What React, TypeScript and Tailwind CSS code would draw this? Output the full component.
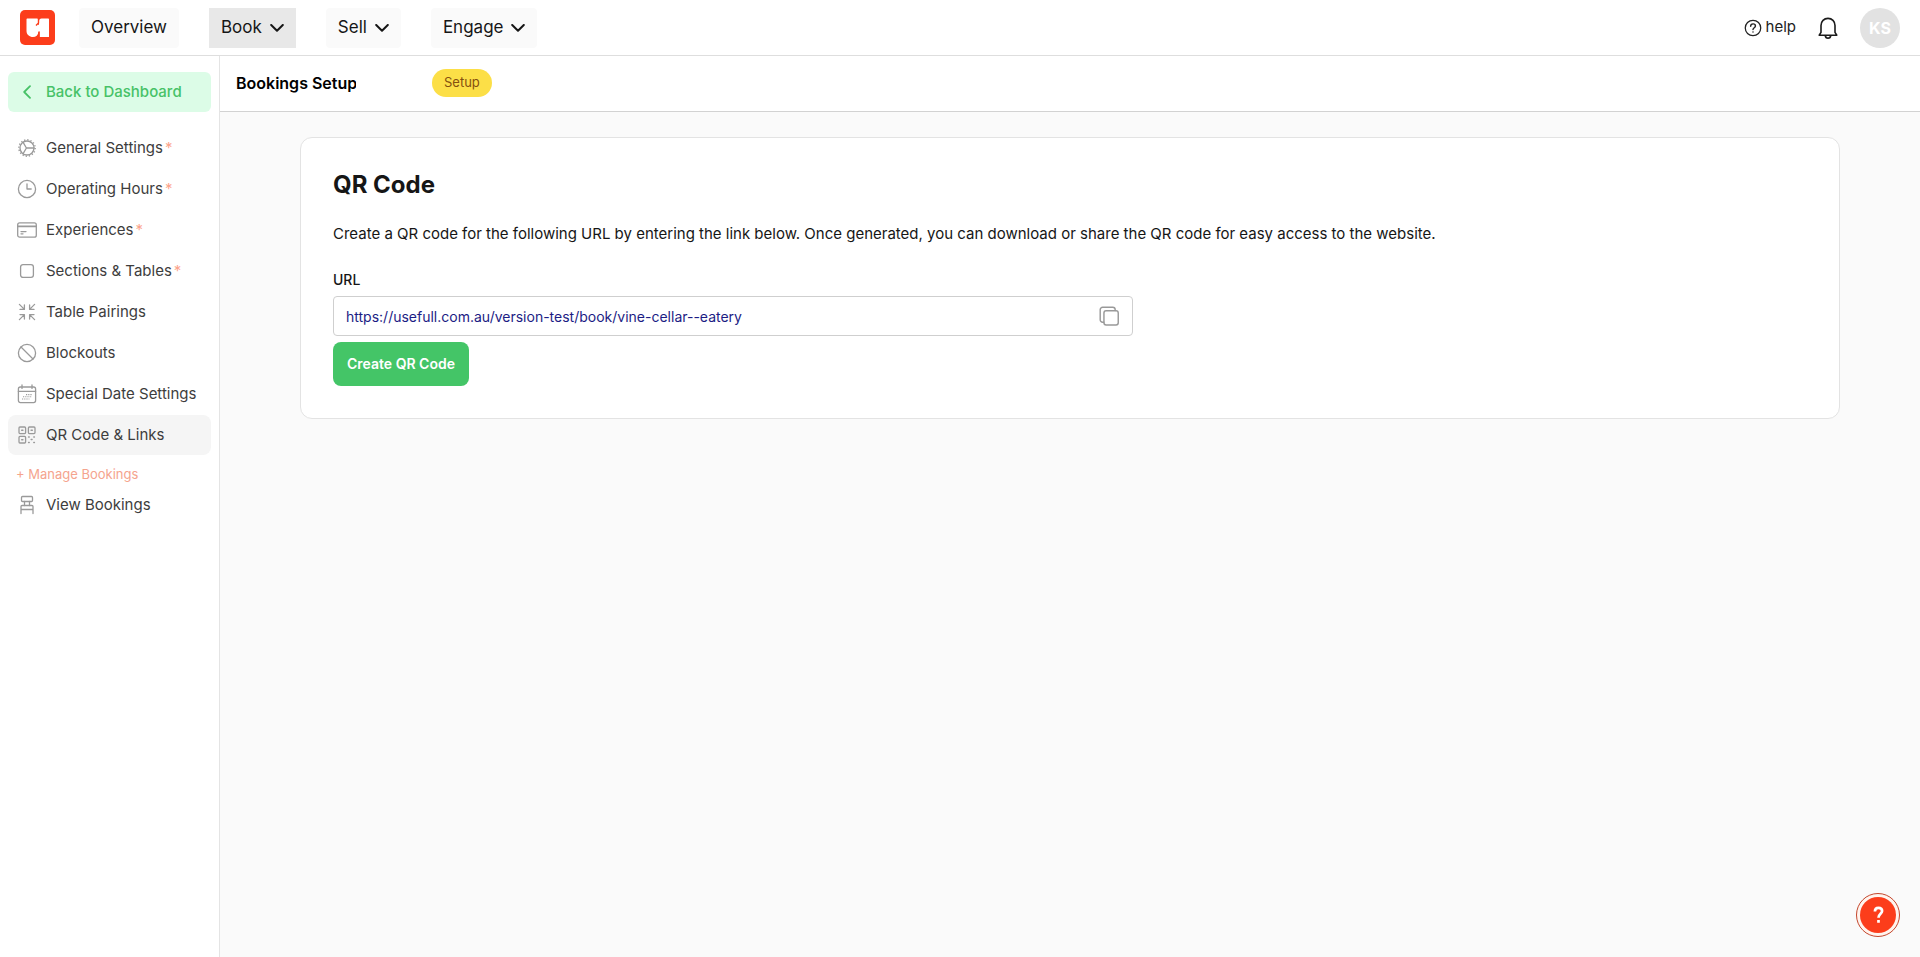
import type { ReactNode } from "react";

function Icon({ children, size = 20, width = 1.3 }: { children: ReactNode; size?: number; width?: number }) {
  return (
    <svg
      width={size}
      height={size}
      viewBox="0 0 20 20"
      fill="none"
      stroke="currentColor"
      strokeWidth={width}
      strokeLinecap="round"
      strokeLinejoin="round"
      aria-hidden="true"
      className="shrink-0"
    >
      {children}
    </svg>
  );
}

const gear = (
  <>
    <circle cx="10" cy="10" r="7" />
    <circle cx="10" cy="10" r="8.2" strokeWidth="1.4" strokeDasharray="1.3 1.92" strokeLinecap="butt" />
    <path d="M9.4 10H17M9.4 10 6 4.2M9.4 10 6 15.8" />
  </>
);

const clock = (
  <>
    <circle cx="10" cy="10" r="8.6" />
    <path d="M10 5v5h4.2" />
  </>
);

const card = (
  <>
    <rect x="0.7" y="2.8" width="18.6" height="14.4" rx="2" />
    <path d="M1 6.4h18" strokeWidth="1.6" />
    <path d="M4 11.6h5M4 13.8h2" />
  </>
);

const square = <rect x="3.6" y="3.6" width="12.8" height="12.8" rx="2.4" />;

const arrowsIn = (
  <>
    <path d="m2.4 2.4 5 5M7.4 3v4.4H3" />
    <path d="m17.6 2.4-5 5M12.6 3v4.4H17" />
    <path d="m2.4 17.6 5-5M7.4 17v-4.4H3" />
    <path d="m17.6 17.6-5-5M12.6 17v-4.4H17" />
  </>
);

const blocked = (
  <>
    <circle cx="10" cy="10" r="8.6" />
    <path d="m4 4 12 12" />
  </>
);

const calendar = (
  <>
    <rect x="1.4" y="3" width="17.2" height="15.6" rx="2" />
    <path d="M1.4 7.4h17.2M5 1v3.4M15 1v3.4" />
    <path d="M9 10.6h6.4M6 12.8h9M5 15h7.4" strokeWidth="1.1" strokeDasharray="1.2 1" strokeLinecap="butt" />
  </>
);

const qr = (
  <>
    <rect x="2" y="2" width="6.6" height="6.6" rx="1" />
    <rect x="11.4" y="2" width="6.6" height="6.6" rx="1" />
    <rect x="2" y="11.4" width="6.6" height="6.6" rx="1" />
    <path
      d="M4.7 5.3h1.2M14.1 5.3h1.2M4.7 14.7h1.2M11.6 12h.6M16.8 12h.6M14.2 14.6h.8M11.6 17.4h.6M16.8 17.4h.6"
      strokeWidth="1.5"
    />
  </>
);

const chair = (
  <>
    <rect x="4.5" y="1.5" width="11" height="5" rx="1" />
    <path d="M7.5 6.5v4M12.5 6.5v4" />
    <path d="M4 18.5v-7c0-.6.4-1 1-1h10c.6 0 1 .4 1 1v7M4 14.5h12" />
  </>
);

const topNav = [
  { label: "Overview", menu: false, active: false },
  { label: "Book", menu: true, active: true },
  { label: "Sell", menu: true, active: false },
  { label: "Engage", menu: true, active: false },
];

const setupNav = [
  { label: "General Settings", icon: gear, required: true },
  { label: "Operating Hours", icon: clock, required: true },
  { label: "Experiences", icon: card, required: true },
  { label: "Sections & Tables", icon: square, required: true },
  { label: "Table Pairings", icon: arrowsIn },
  { label: "Blockouts", icon: blocked },
  { label: "Special Date Settings", icon: calendar },
  { label: "QR Code & Links", icon: qr, active: true },
];

type NavItem = { label: string; icon: ReactNode; required?: boolean; active?: boolean };

function SideLink({ item }: { item: NavItem }) {
  return (
    <a
      href="#"
      aria-current={item.active ? "page" : undefined}
      className={`flex h-10 items-center gap-2 rounded-lg pl-[9px] text-[15px] whitespace-nowrap text-[#3d3d3d] ${
        item.active ? "bg-[#f5f5f5]" : "hover:bg-gray-50"
      }`}
    >
      <span className="flex w-5 justify-center text-[#9a9a9a]">
        <Icon>{item.icon}</Icon>
      </span>
      <span className="ml-px">
        {item.label}
        {item.required && <span className="ml-0.5 text-[#fca48c]">*</span>}
      </span>
    </a>
  );
}

function Header() {
  return (
    <header className="flex h-14 shrink-0 items-center border-b border-[#dedede] bg-white px-5">
      <a href="#" aria-label="Home">
        <svg width="35" height="35" viewBox="0 0 35 35" aria-hidden="true">
          <rect width="35" height="35" rx="5" fill="#fc3d1b" />
          <path
            d="M7.5 8.5H17c.6 0 1 .4 1 1V15l1-.6V11c0-1.5 1-2.500 2.500-2.500H28c.6 0 1 .4 1 1V27h-9.500v-5.500l-1 .5c-.4 3-2.600 5-5.500 5-3.600 0-6.500-2.400-6.500-6V9.500c0-.6.4-1 1-1z"
            fill="#fff"
          />
          <path d="M18.500 8v5l-2.500 2.500M19 27v-5.500" fill="none" stroke="#fc3d1b" strokeWidth="1.4" />
        </svg>
      </a>
      <nav className="ml-6 flex gap-[30px]">
        {topNav.map((item) => (
          <button
            key={item.label}
            type="button"
            className={`flex h-10 items-center gap-2 px-3 text-[17px] text-[#161616] ${
              item.active ? "bg-[#e8e8e8]" : "rounded bg-[#fafafa]"
            }`}
          >
            {item.label}
            {item.menu && (
              <svg width="14" height="8" viewBox="0 0 14 8" fill="none" stroke="currentColor" strokeWidth="2" strokeLinecap="round" strokeLinejoin="round" aria-hidden="true">
                <path d="m1.2 1 5.8 5.8L12.8 1" />
              </svg>
            )}
          </button>
        ))}
      </nav>
      <div className="ml-auto flex items-center">
        <a href="#" className="flex items-center gap-1 text-[15px] text-[#222]">
          <Icon size={18} width={1.4}>
            <circle cx="10" cy="10" r="8.6" />
            <path d="M7.4 8c0-1.6 1.2-2.6 2.7-2.6s2.6 1 2.6 2.4c0 1.9-2.7 2-2.7 3.9M10 14.3v.2" strokeWidth="1.6" />
          </Icon>
          help
        </a>
        <button type="button" aria-label="Notifications" className="ml-5">
          <svg width="24" height="24" viewBox="0 0 24 24" fill="none" stroke="#1b1b1b" strokeWidth="1.6" strokeLinejoin="round" aria-hidden="true">
            <path d="M3.2 19.2 5 16.4V9.6C5 5.4 8 2.4 12 2.4s7 3 7 7.2v6.8l1.8 2.8z" />
            <path d="M9.2 19.4c.2 1.8 1.4 2.8 2.8 2.8s2.6-1 2.8-2.8" />
          </svg>
        </button>
        <button type="button" className="ml-5 h-10 w-10 rounded-full bg-[#e2e2e2] text-base font-bold text-white">
          KS
        </button>
      </div>
    </header>
  );
}

function Sidebar() {
  return (
    <aside className="w-[220px] shrink-0 border-r border-[#e4e4e4] bg-white px-2 pt-4">
      <a
        href="#"
        className="flex h-10 items-center gap-2 rounded-md bg-[#dcfce7] pl-[9px] text-[15px] font-medium whitespace-nowrap text-[#47c267]"
      >
        <span className="flex w-5 justify-center">
          <svg width="8" height="14" viewBox="0 0 8 14" fill="none" stroke="currentColor" strokeWidth="1.8" strokeLinecap="round" strokeLinejoin="round" aria-hidden="true">
            <path d="M7 1.2 1.2 7 7 12.8" />
          </svg>
        </span>
        <span className="ml-px">Back to Dashboard</span>
      </a>
      <nav className="mt-4 flex flex-col gap-px">
        {setupNav.map((item) => (
          <SideLink key={item.label} item={item} />
        ))}
        <p className="mt-2 pl-2 text-[13px] leading-5 text-[#f5a48e]">+ Manage Bookings</p>
        <SideLink item={{ label: "View Bookings", icon: chair }} />
      </nav>
    </aside>
  );
}

export default function App() {
  return (
    <div className="flex min-h-screen flex-col bg-[#fafafa] font-['Inter',sans-serif] text-[#161616]">
      <Header />
      <div className="flex flex-1">
        <Sidebar />
        <div className="min-w-0 flex-1">
          <div className="flex h-14 items-center border-b border-[#d2d2d2] bg-white pb-0.5 pl-4">
            <h1 className="w-[120px] overflow-hidden text-base font-semibold whitespace-nowrap text-black">Bookings Setup</h1>
            <span className="ml-[76px] flex h-7 items-center rounded-full bg-[#fcdf47] px-3 text-[13px] text-[#85500f]">Setup</span>
          </div>
          <main className="px-20 pt-[25px]">
            <section className="rounded-xl border border-[#e3e3e3] bg-white p-8">
              <h2 className="text-2xl leading-[30px] font-bold">QR Code</h2>
              <p className="mt-[22px] text-[15px] leading-6">
                Create a QR code for the following URL by entering the link below. Once generated, you can download or share the QR code
                for easy access to the website.
              </p>
              <label htmlFor="url" className="mt-[22px] block text-sm leading-6 font-medium">
                URL
              </label>
              <div className="mt-1 flex h-10 max-w-[800px] items-center rounded border border-[#cfcfcf] pr-3">
                <input
                  id="url"
                  type="text"
                  readOnly
                  defaultValue="https://usefull.com.au/version-test/book/vine-cellar--eatery"
                  className="h-full min-w-0 flex-1 bg-transparent pl-3 text-sm text-[#1c1c84] outline-none"
                />
                <button type="button" aria-label="Copy link" className="text-[#999]">
                  <Icon size={22}>
                    <path d="M5.4 15.6H4.2A2.2 2.2 0 0 1 2 13.4V4.2C2 3 3 2 4.2 2h9.2c1.2 0 2.2 1 2.2 2.2v.8" />
                    <rect x="5.4" y="5.2" width="13" height="13" rx="2" />
                  </Icon>
                </button>
              </div>
              <button type="button" className="mt-1.5 h-11 rounded-lg bg-[#44c567] px-3.5 text-sm font-semibold text-white">
                Create QR Code
              </button>
            </section>
          </main>
        </div>
      </div>
      <button
        type="button"
        aria-label="Help"
        className="fixed right-5 bottom-5 flex h-11 w-11 items-center justify-center rounded-full border border-[#c4462c] bg-[#fff4ee]"
      >
        <span className="flex h-9 w-9 items-center justify-center rounded-full bg-[#fc3d1b] text-white">
          <svg width="11" height="18" viewBox="0 0 12 20" fill="none" stroke="currentColor" strokeWidth="3" aria-hidden="true">
            <path d="M2 6.2C2 3.6 3.6 2 6 2s4 1.4 4 3.6C10 8.6 6 8.8 6 13M6 15.6v3" />
          </svg>
        </span>
      </button>
    </div>
  );
}
